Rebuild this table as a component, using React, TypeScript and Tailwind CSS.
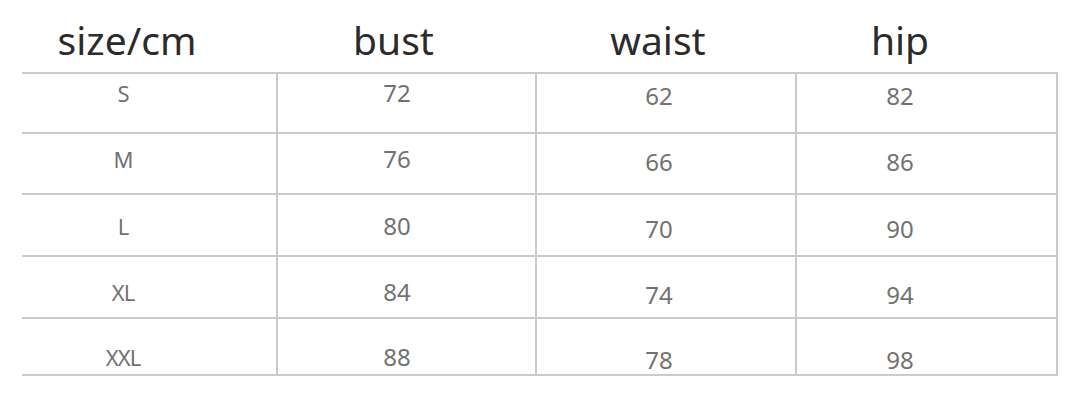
import React from 'react';

const rows = [
  { size: 'S', bust: '72', waist: '62', hip: '82', h: 'h-[60px]', pt: 'pt-[7px]' },
  { size: 'M', bust: '76', waist: '66', hip: '86', h: 'h-[61px]', pt: 'pt-[13px]' },
  { size: 'L', bust: '80', waist: '70', hip: '90', h: 'h-[62px]', pt: 'pt-[19px]' },
  { size: 'XL', bust: '84', waist: '74', hip: '94', h: 'h-[62px]', pt: 'pt-[23px]' },
  { size: 'XXL', bust: '88', waist: '78', hip: '98', h: 'h-[57px]', pt: 'pt-[26px]' },
];

const cols = 'grid grid-cols-[254px_259px_260px_263px]';

const App: React.FC = () => {
  return (
    <div className="w-[1089px] h-[405px] bg-white overflow-hidden" style={{ fontFamily: '"Noto Sans", Roboto, sans-serif' }}>
      <div className="ml-[22px] w-[1036px]">
        {/* Header */}
        <div className={`${cols} h-[72px] pt-[20px] text-[39px] leading-none text-[#2b2b2b]`}>
          <div className="text-center pr-[44px]">size/cm</div>
          <div className="text-center pr-[24px]">bust</div>
          <div className="text-center pr-[14px]">waist</div>
          <div className="text-center pr-[53px]">hip</div>
        </div>

        {/* Body */}
        <div className="border-b-2 border-[#cbcbcb] text-[24px] leading-none text-[#727272]">
          {rows.map((r) => (
            <div key={r.size} className={`${cols} ${r.h} border-t-2 border-[#cbcbcb]`}>
              <div className={`text-center pr-[52px] ${r.pt}`}>
                <span className="text-[22px] tracking-[-1px]">{r.size}</span>
              </div>
              <div className={`text-center pr-[19px] border-l-2 border-[#cbcbcb] ${r.pt}`}>{r.bust}</div>
              <div className={`text-center pr-[14px] border-l-2 border-[#cbcbcb] ${r.pt}`}>
                <div className="mt-[3px]">{r.waist}</div>
              </div>
              <div className={`text-center pr-[53px] border-x-2 border-[#cbcbcb] ${r.pt}`}>
                <div className="mt-[3px]">{r.hip}</div>
              </div>
            </div>
          ))}
        </div>
      </div>
    </div>
  );
};

export default App;
